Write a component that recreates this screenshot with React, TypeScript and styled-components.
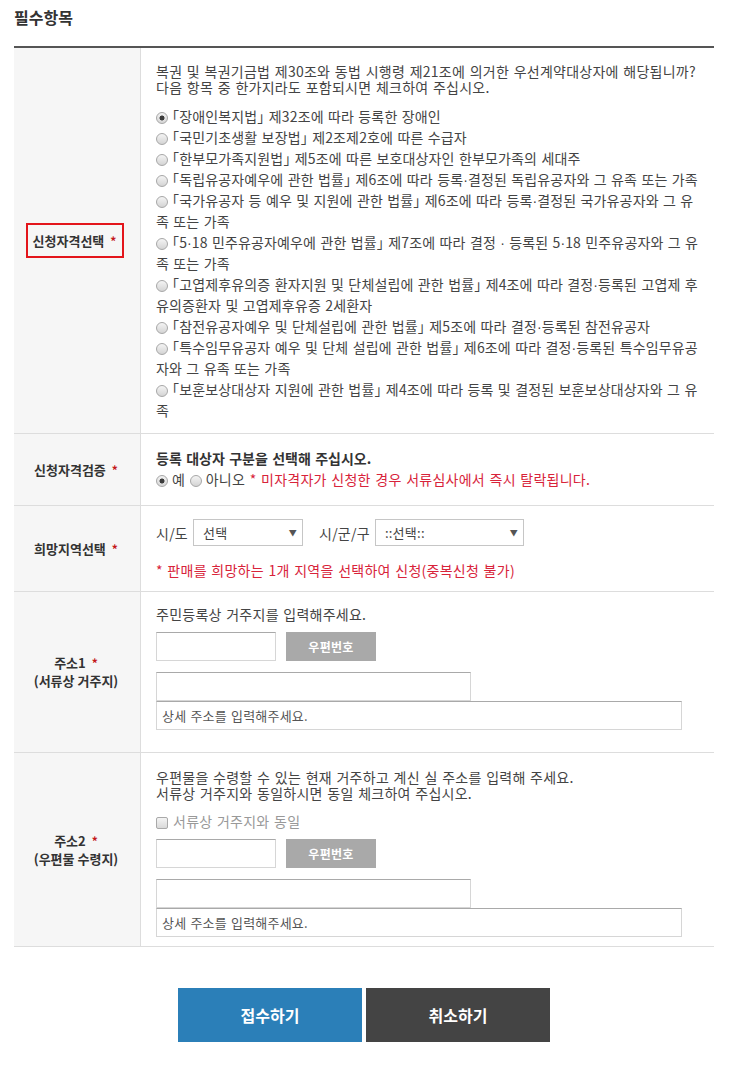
import { Fragment } from 'react';
import styled, { createGlobalStyle } from 'styled-components';

const GlobalStyle = createGlobalStyle`
  body {
    margin: 0;
    background: #fff;
    color: #444;
    font-family: 'Noto Sans CJK KR', 'Liberation Sans', sans-serif;
    font-size: 13px;
  }
  * {
    box-sizing: border-box;
  }
`;

const QUALIFICATIONS = [
  '「장애인복지법」 제32조에 따라 등록한 장애인',
  '「국민기초생활 보장법」 제2조제2호에 따른 수급자',
  '「한부모가족지원법」 제5조에 따른 보호대상자인 한부모가족의 세대주',
  '「독립유공자예우에 관한 법률」 제6조에 따라 등록·결정된 독립유공자와 그 유족 또는 가족',
  '「국가유공자 등 예우 및 지원에 관한 법률」 제6조에 따라 등록·결정된 국가유공자와 그 유족 또는 가족',
  '「5·18 민주유공자예우에 관한 법률」 제7조에 따라 결정 · 등록된 5·18 민주유공자와 그 유족 또는 가족',
  '「고엽제후유의증 환자지원 및 단체설립에 관한 법률」 제4조에 따라 결정·등록된 고엽제 후유의증환자 및 고엽제후유증 2세환자',
  '「참전유공자예우 및 단체설립에 관한 법률」 제5조에 따라 결정·등록된 참전유공자',
  '「특수임무유공자 예우 및 단체 설립에 관한 법률」 제6조에 따라 결정·등록된 특수임무유공자와 그 유족 또는 가족',
  '「보훈보상대상자 지원에 관한 법률」 제4조에 따라 등록 및 결정된 보훈보상대상자와 그 유족',
];

// the CJK font draws "·" full width, so the dots get a narrow latin face
const withDots = (text: string) =>
  text.split('·').map((part, i) => (
    <Fragment key={i}>
      {i > 0 && <MidDot>·</MidDot>}
      {part}
    </Fragment>
  ));

const App = () => {
  return (
    <Page>
      <GlobalStyle />
      <Title>필수항목</Title>

      <Table>
        <Row>
          <Th>
            <Highlight>
              신청자격선택<Req>*</Req>
            </Highlight>
          </Th>
          <Td $pt={15} $pb={12}>
            <Intro>
              복권 및 복권기금법 제30조와 동법 시행령 제21조에 의거한 우선계약대상자에 해당됩니까?
              <br />
              다음 항목 중 한가지라도 포함되시면 체크하여 주십시오.
            </Intro>
            {QUALIFICATIONS.map((text, i) => (
              <RadioItem key={i}>
                <Radio $checked={i === 0} />
                {withDots(text)}
              </RadioItem>
            ))}
          </Td>
        </Row>

        <Row>
          <Th>
            <span>
              신청자격검증<Req>*</Req>
            </span>
          </Th>
          <Td $pt={14} $pb={15}>
            <Line $bold>등록 대상자 구분을 선택해 주십시오.</Line>
            <Line>
              <Radio $checked />예 <Radio />아니오 <Warn>* 미자격자가 신청한 경우 서류심사에서 즉시 탈락됩니다.</Warn>
            </Line>
          </Td>
        </Row>

        <Row>
          <Th>
            <span>
              희망지역선택<Req>*</Req>
            </span>
          </Th>
          <Td $pt={13} $pb={10}>
            <SelectRow>
              <span>시/도</span>
              <SelectBox $w={110}>
                <span>선택</span>
                <Arrow>▼</Arrow>
              </SelectBox>
              <SelectLabel>시/군/구</SelectLabel>
              <SelectBox $w={149}>
                <span>::선택::</span>
                <Arrow>▼</Arrow>
              </SelectBox>
            </SelectRow>
            <Note>* 판매를 희망하는 1개 지역을 선택하여 신청(중복신청 불가)</Note>
          </Td>
        </Row>

        <Row>
          <Th>
            <span>
              주소1<Req>*</Req>
              <br />
              (서류상 거주지)
            </span>
          </Th>
          <Td $pt={12} $pb={22}>
            <Line>주민등록상 거주지를 입력해주세요.</Line>
            <ZipRow>
              <Input $w={120} />
              <ZipButton>우편번호</ZipButton>
            </ZipRow>
            <Input $w={315} />
            <Input $w={526} placeholder="상세 주소를 입력해주세요." />
          </Td>
        </Row>

        <Row>
          <Th>
            <span>
              주소2<Req>*</Req>
              <br />
              (우편물 수령지)
            </span>
          </Th>
          <Td $pt={16} $pb={9}>
            <Intro $tight>
              우편물을 수령할 수 있는 현재 거주하고 계신 실 주소를 입력해 주세요.
              <br />
              서류상 거주지와 동일하시면 동일 체크하여 주십시오.
            </Intro>
            <CheckLine>
              <Check />
              서류상 거주지와 동일
            </CheckLine>
            <ZipRow>
              <Input $w={120} />
              <ZipButton>우편번호</ZipButton>
            </ZipRow>
            <Input $w={315} />
            <Input $w={526} placeholder="상세 주소를 입력해주세요." />
          </Td>
        </Row>
      </Table>

      <Actions>
        <ActionButton $variant="primary">접수하기</ActionButton>
        <ActionButton $variant="dark">취소하기</ActionButton>
      </Actions>
    </Page>
  );
};

const Page = styled.div`
  width: 700px;
  margin-left: 14px;
  padding-bottom: 24px;
`;

const Title = styled.h2`
  margin: 0;
  padding-top: 6px;
  height: 46px;
  font-size: 16px;
  line-height: 22px;
  font-weight: 700;
  color: #333;
`;

const Table = styled.div`
  border-top: 2px solid #555;
`;

const Row = styled.div`
  display: grid;
  grid-template-columns: 127px 1fr;
  border-bottom: 1px solid #ddd;
`;

const Th = styled.div`
  display: flex;
  align-items: center;
  justify-content: center;
  background: #f6f6f6;
  border-right: 1px solid #ddd;
  color: #333;
  font-weight: 700;
  font-size: 13px;
  line-height: 18px;
  text-align: center;
  padding-right: 2px;
`;

const Highlight = styled.span`
  display: inline-block;
  border: 2px solid #e3151b;
  padding: 5px 6px 5px 5px;
  line-height: 21px;
  margin-right: 2px;
`;

const Req = styled.span`
  color: #c4161c;
  font-size: 12px;
  margin-left: 6px;
`;

const Td = styled.div<{ $pt: number; $pb: number }>`
  padding: ${p => p.$pt}px 10px ${p => p.$pb}px 15px;
  color: #444;
  font-size: 14px;
  letter-spacing: 0.25px;
  word-spacing: 1.2px;
  word-break: break-all;
  font-feature-settings: 'halt';
`;

const Intro = styled.p<{ $tight?: boolean }>`
  margin: 0 0 ${p => (p.$tight ? 10 : 11)}px;
  line-height: 16px;
`;

const RadioItem = styled.div`
  line-height: 21px;
  letter-spacing: 0.15px;
  word-spacing: 1px;
`;

const MidDot = styled.span`
  font-family: 'Liberation Sans', sans-serif;
  letter-spacing: 0;
  line-height: 0;
`;

const Line = styled.div<{ $bold?: boolean }>`
  line-height: 21px;
  font-weight: ${p => (p.$bold ? 700 : 400)};
  color: ${p => (p.$bold ? '#333' : '#444')};
  letter-spacing: ${p => (p.$bold ? '0' : '0.25px')};
`;

const Radio = styled.span<{ $checked?: boolean }>`
  display: inline-block;
  width: 12px;
  height: 12px;
  margin-right: 4px;
  vertical-align: -2px;
  border-radius: 50%;
  border: 1px solid #a7a7a7;
  background: ${p =>
    p.$checked
      ? 'radial-gradient(circle, #3c3c3c 0 2.2px, transparent 2.8px), linear-gradient(#f2f2f2, #d6d6d6)'
      : 'linear-gradient(#f4f4f4, #d4d4d4)'};
`;

const Warn = styled.span`
  color: #d8233a;
`;

const Note = styled.div`
  margin-top: 14px;
  line-height: 21px;
  color: #d8233a;
`;

const SelectRow = styled.div`
  display: flex;
  align-items: center;
  gap: 5px;
  height: 27px;
`;

const SelectLabel = styled.span`
  margin-left: 11px;
`;

const SelectBox = styled.div<{ $w: number }>`
  display: flex;
  align-items: center;
  justify-content: space-between;
  width: ${p => p.$w}px;
  height: 27px;
  padding: 0 5px 0 9px;
  border: 1px solid #c6c6c6;
  background: #fff;
  font-size: 13px;
  color: #444;
`;

const Arrow = styled.span`
  font-size: 8px;
  color: #555;
`;

const ZipRow = styled.div`
  display: flex;
  gap: 10px;
  margin: 7px 0 11px;
`;

const Input = styled.input<{ $w: number }>`
  display: block;
  width: ${p => p.$w}px;
  height: 29px;
  margin: 0;
  padding: 0 5px;
  border: 1px solid #d6d6d6;
  border-top-color: #a9a9a9;
  background: #fff;
  font-family: inherit;
  font-size: 13px;
  letter-spacing: 0.2px;
  word-spacing: 1px;
  color: #444;
  &::placeholder {
    color: #555;
  }
`;

const ZipButton = styled.button`
  width: 90px;
  height: 29px;
  border: 0;
  background: #a9a9a9;
  color: #fff;
  font-family: inherit;
  font-size: 12px;
  font-weight: 700;
  letter-spacing: 0.3px;
`;

const CheckLine = styled.div`
  line-height: 21px;
  color: #999;
`;

const Check = styled.span`
  display: inline-block;
  width: 12px;
  height: 12px;
  margin-right: 5px;
  vertical-align: -2px;
  border: 1px solid #a9a9a9;
  border-radius: 2px;
  background: linear-gradient(#f4f4f4, #d9d9d9);
`;

const Actions = styled.div`
  display: flex;
  justify-content: center;
  gap: 4px;
  margin-top: 41px;
`;

const ActionButton = styled.button<{ $variant: 'primary' | 'dark' }>`
  width: 184px;
  height: 54px;
  border: 0;
  background: ${p => (p.$variant === 'primary' ? '#2b7fb8' : '#444')};
  color: #fff;
  font-family: inherit;
  font-size: 16px;
  font-weight: 700;
`;

export default App;
